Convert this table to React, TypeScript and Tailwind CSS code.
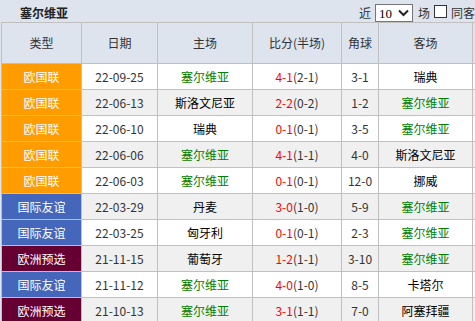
import React from "react";

type Row = {
  type: "o" | "b" | "m";
  date: string;
  home: string;
  homeG: boolean;
  ft: string;
  ht: string;
  corner: string;
  away: string;
  awayG: boolean;
};

const rows: Row[] = [
  { type: "o", date: "22-09-25", home: "塞尔维亚", homeG: true, ft: "4-1", ht: "(2-1)", corner: "3-1", away: "瑞典", awayG: false },
  { type: "o", date: "22-06-13", home: "斯洛文尼亚", homeG: false, ft: "2-2", ht: "(0-2)", corner: "1-2", away: "塞尔维亚", awayG: true },
  { type: "o", date: "22-06-10", home: "瑞典", homeG: false, ft: "0-1", ht: "(0-1)", corner: "3-5", away: "塞尔维亚", awayG: true },
  { type: "o", date: "22-06-06", home: "塞尔维亚", homeG: true, ft: "4-1", ht: "(1-1)", corner: "4-0", away: "斯洛文尼亚", awayG: false },
  { type: "o", date: "22-06-03", home: "塞尔维亚", homeG: true, ft: "0-1", ht: "(0-1)", corner: "12-0", away: "挪威", awayG: false },
  { type: "b", date: "22-03-29", home: "丹麦", homeG: false, ft: "3-0", ht: "(1-0)", corner: "5-9", away: "塞尔维亚", awayG: true },
  { type: "b", date: "22-03-25", home: "匈牙利", homeG: false, ft: "0-1", ht: "(0-1)", corner: "2-3", away: "塞尔维亚", awayG: true },
  { type: "m", date: "21-11-15", home: "葡萄牙", homeG: false, ft: "1-2", ht: "(1-1)", corner: "3-10", away: "塞尔维亚", awayG: true },
  { type: "b", date: "21-11-12", home: "塞尔维亚", homeG: true, ft: "4-0", ht: "(1-0)", corner: "8-5", away: "卡塔尔", awayG: false },
  { type: "m", date: "21-10-13", home: "塞尔维亚", homeG: true, ft: "3-1", ht: "(1-1)", corner: "7-0", away: "阿塞拜疆", awayG: false },
];

const typeInfo = {
  o: { label: "欧国联", cls: "bg-[#ff9c00]" },
  b: { label: "国际友谊", cls: "bg-[#4466bb]" },
  m: { label: "欧洲预选", cls: "bg-[#660033]" },
};

const headers = ["类型", "日期", "主场", "比分(半场)", "角球", "客场", ""];

export default function App() {
  return (
    <div
      className="w-[475px] h-[321px] overflow-hidden bg-[#dde4ee] text-[12px] text-[#333]"
      style={{ fontFamily: '"Noto Sans CJK SC", "Noto Sans", sans-serif' }}
    >
      <div className="h-[22px] flex items-center justify-between">
        <div className="pl-[20px] pt-[3px] font-bold text-[#222] leading-none">塞尔维亚</div>
        <div className="flex items-center h-full pt-[3px] whitespace-nowrap leading-none">
          <span>近</span>
          <div className="ml-[4px] w-[38px] h-[18px] border border-[#767676] bg-white flex items-center justify-between pl-[3px] pr-[3px] mt-[1px]">
            <span className="text-[13px] text-black" style={{ fontFamily: '"Liberation Serif", serif' }}>10</span>
            <svg width="11" height="8" viewBox="0 0 11 8">
              <path d="M1 1.5 L5.5 6 L10 1.5" fill="none" stroke="#222" strokeWidth="2" />
            </svg>
          </div>
          <span className="ml-[5px]">场</span>
          <div className="ml-[4px] w-[13px] h-[13px] border border-[#333] bg-white mb-[3px]" />
          <span className="ml-[4px]">同客</span>
        </div>
      </div>
      <div className="pl-px">
        <div className="grid grid-cols-[79px_75px_94px_88px_36px_93px_60px] gap-px bg-[#c0c0c0] p-px w-max">
          {headers.map((h, i) => (
            <div key={i} className="h-[40px] bg-[#dde4ee] flex items-center justify-center text-[#333]">
              {h}
            </div>
          ))}
          {rows.map((r, i) => {
            const bg = i % 2 === 0 ? "bg-white" : "bg-[#f0f0f0]";
            const t = typeInfo[r.type];
            return (
              <React.Fragment key={i}>
                <div className={`h-[25px] ${t.cls} text-white flex items-center justify-center`}>{t.label}</div>
                <div className={`h-[25px] ${bg} flex items-center justify-center`}>{r.date}</div>
                <div className={`h-[25px] ${bg} flex items-center justify-center ${r.homeG ? "text-[#008000]" : "text-black"}`}>{r.home}</div>
                <div className={`h-[25px] ${bg} flex items-center justify-center`}>
                  <span className="text-[#ff0000]">{r.ft}</span>
                  <span>{r.ht}</span>
                </div>
                <div className={`h-[25px] ${bg} flex items-center justify-center`}>{r.corner}</div>
                <div className={`h-[25px] ${bg} flex items-center justify-center ${r.awayG ? "text-[#008000]" : "text-black"}`}>{r.away}</div>
                <div className={`h-[25px] ${bg}`} />
              </React.Fragment>
            );
          })}
        </div>
      </div>
    </div>
  );
}
